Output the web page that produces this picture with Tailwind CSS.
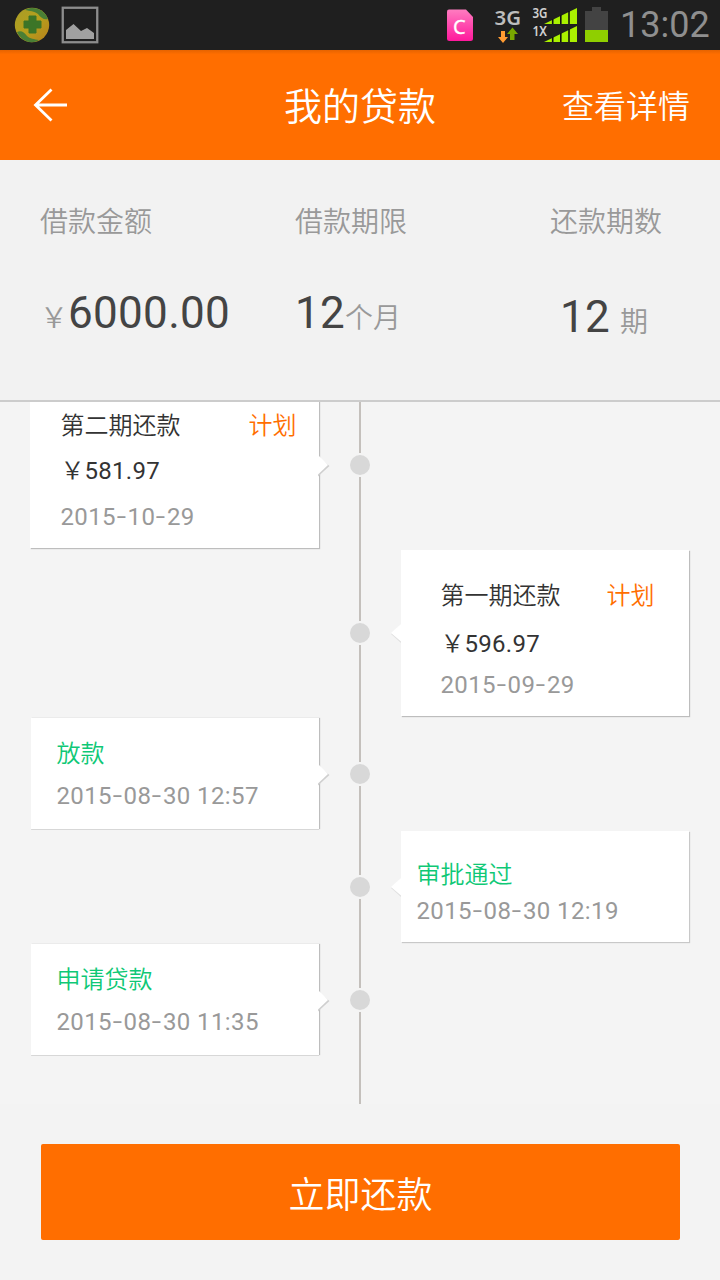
<!DOCTYPE html>
<html lang="zh-CN">
<head>
<meta charset="utf-8">
<meta name="viewport" content="width=720">
<title>我的贷款</title>
<script src="https://cdn.jsdelivr.net/npm/@tailwindcss/browser@4"></script>
</head>
<body class="bg-[#f3f3f3]">
<div class="w-[720px] h-[1280px] flex flex-col overflow-hidden whitespace-nowrap font-['Roboto','Noto_Sans_CJK_SC',sans-serif]">

  <!-- Status bar -->
  <div class="h-[50px] shrink-0 bg-[#1f1f1f] flex items-center justify-between">
    <svg class="w-[120px] h-[50px]" viewBox="0 0 120 50">
      <defs>
        <linearGradient id="ball" x1="0" y1="0" x2="1" y2="1"><stop offset="0" stop-color="#a89c28"/><stop offset=".5" stop-color="#b5a01c"/><stop offset="1" stop-color="#b8801c"/></linearGradient>
      </defs>
      <circle cx="32" cy="25" r="17.2" fill="url(#ball)"/>
      <path d="M25 10C34 5 45 10 48 19C44 20 41 18 38 14C34 11 30 11 25 10Z" fill="#4a7f35"/>
      <path d="M39 40C31 45 21 41 17 32C21 30 24 32 27 36C30 39 34 39 39 40Z" fill="#4a7f35"/>
      <path d="M29 16h7v5h5v7h-5v5h-7v-5h-5v-7h5z" fill="#3c7527" stroke="#3c7527" stroke-width="1" stroke-linejoin="round"/>
      <rect x="62.750" y="7.750" width="34.500" height="34.500" fill="#1f1f1f" stroke="#8d8d8d" stroke-width="2.300"/>
      <path d="M66 30L73.500 24L81 31L87 28L94 33V39H66Z" fill="#a0a0a0"/>
    </svg>
    <div class="flex items-center">
      <svg class="w-[170px] h-[50px]" viewBox="440 0 170 50">
        <defs>
          <linearGradient id="sim" x1="0" y1="0" x2="0" y2="1"><stop offset="0" stop-color="#ff7cc0"/><stop offset="1" stop-color="#ff189c"/></linearGradient>
        </defs>
        <path d="M449 9.500H466L473 17V38.500Q473 41 470.500 41H449.500Q447 41 447 38.500V11.500Q447 9.500 449 9.500Z" fill="url(#sim)"/>
        <text x="453" y="34" font-family="Noto Sans" font-size="20" font-weight="400" fill="#fff" stroke="#fff" stroke-width=".3">C</text>
        <text x="494.500" y="25" font-family="Noto Sans" font-size="20.500" font-weight="600" fill="#bdbdbd" textLength="26.500" lengthAdjust="spacingAndGlyphs">3G</text>
        <path d="M501 31H505V37H508L503 43L498 37H501Z" fill="#ff9b32"/>
        <path d="M510 40V34H507L512.500 27.500L518 34H514.500V40Z" fill="#79a800"/>
        <text x="532.500" y="18" font-family="Noto Sans" font-size="13.500" font-weight="600" fill="#d0d0d0" textLength="15" lengthAdjust="spacingAndGlyphs">3G</text>
        <text x="532.500" y="36" font-family="Noto Sans" font-size="13.500" font-weight="600" fill="#d0d0d0" textLength="14.500" lengthAdjust="spacingAndGlyphs">1X</text>
        <path d="M544 24L577 8V24Z M544 42L577 26V42Z" fill="#aaf000"/>
        <path d="M552.700 19V24M560.800 15V24M569 11V24M552.700 37V42M560.800 33V42M569 29V42" stroke="#111" stroke-width="1.600"/>
        <path d="M585 11H592V7H601V11H608V30H585Z" fill="#434343"/>
        <rect x="585" y="30" width="23" height="12" fill="#8fcf00"/>
      </svg>
      <div class="w-[110px] pl-[10px] text-[36px] leading-[50px] text-[#8f8f8f]">13:02</div>
    </div>
  </div>

  <!-- Title bar -->
  <header class="h-[110px] shrink-0 bg-[#ff6e00] bg-linear-to-b from-[#e66300] from-0% to-[#ff6e00] to-4% grid grid-cols-[1fr_auto_1fr] items-center text-white">
    <svg class="ml-[33px] w-[36px] h-[36px]" viewBox="0 0 36 36" fill="none" stroke="#fff" stroke-width="2.800"><path d="M2 18H34M18.500 2.500L2.500 18L18.500 33.500"/></svg>
    <h1 class="text-[38px] leading-[50px] font-[350] pt-[4px]">我的贷款</h1>
    <div class="text-[32px] leading-[50px] text-right pr-[30px] pt-[3px] font-[350]">查看详情</div>
  </header>

  <!-- Loan summary -->
  <section class="h-[242px] shrink-0 bg-[#f2f2f2] border-b-2 border-[#cccccc] grid grid-cols-[255px_255px_170px] pl-10 pt-[43px] text-[28px] font-[350] text-[#999999]">
    <div>
      <div class="leading-[40px]">借款金额</div>
      <div class="mt-[40px] leading-[60px]">￥<span class="text-[44px] tracking-[.3px] font-normal text-[#444444]">6000.00</span></div>
    </div>
    <div>
      <div class="leading-[40px]">借款期限</div>
      <div class="mt-[40px] leading-[60px]"><span class="text-[44px] tracking-[.3px] font-normal text-[#444444]">12</span>个月</div>
    </div>
    <div>
      <div class="leading-[40px]">还款期数</div>
      <div class="mt-[44px] pl-[10px] leading-[60px]"><span class="text-[44px] tracking-[.3px] font-normal text-[#444444] mr-[10px]">12</span>期</div>
    </div>
  </section>

  <!-- Repayment timeline -->
  <main class="h-[702px] shrink-0 bg-[#f4f4f4] overflow-hidden text-[24px] leading-8 text-[#999999]">
    <div class="-mt-[21px] h-[168px] grid grid-cols-[350px_20px_350px]">
      <div class="relative ml-[30px] w-[289px] h-[166px] mt-px bg-white shadow-[1px_1px_1px_#bdbdbd] pl-[30.4px] pt-[28px]">
        <div class="flex font-[350] text-[#333333]"><span class="w-[188px]">第二期还款</span><span class="text-[#ff6e00]">计划</span></div>
        <div class="mt-[13px] tracking-[.3px] text-[#333333]"><span class="tracking-normal font-[350]">￥</span>581.97</div>
        <div class="mt-[14px] tracking-[.4px]">2015<span class="inline-block w-[11.6px] text-center scale-x-140 -translate-y-px">-</span>10<span class="inline-block w-[11.6px] text-center scale-x-140 -translate-y-px">-</span>29</div>
        <svg class="absolute left-[288px] top-[72px] w-[12px] h-[24px]" viewBox="0 0 12 24"><path d="M0 3L11.500 12L0 22.500Z" fill="#cfcfcf"/><path d="M0 1L10 11L0 20.500Z" fill="#fff"/></svg>
      </div>
      <div class="flex flex-col items-center gap-[2px]"><i class="flex-1 w-[2px] bg-[#c4c0bc]"></i><i class="size-5 rounded-full bg-[#d8d8d8]"></i><i class="flex-1 w-[2px] bg-[#c4c0bc]"></i></div>
    </div>

    <div class="h-[168px] grid grid-cols-[350px_20px_350px]">
      <div></div>
      <div class="flex flex-col items-center gap-[2px]"><i class="flex-1 w-[2px] bg-[#c4c0bc]"></i><i class="size-5 rounded-full bg-[#d8d8d8]"></i><i class="flex-1 w-[2px] bg-[#c4c0bc]"></i></div>
      <div class="relative ml-[31px] w-[288px] h-[166px] mt-px bg-white shadow-[1px_1px_1px_#bdbdbd] pl-[39.4px] pt-[30px]">
        <div class="flex font-[350] text-[#333333]"><span class="w-[166px]">第一期还款</span><span class="text-[#ff6e00]">计划</span></div>
        <div class="mt-[16px] tracking-[.3px] text-[#333333]"><span class="tracking-normal font-[350]">￥</span>596.97</div>
        <div class="mt-[9px] tracking-[.4px]">2015<span class="inline-block w-[11.6px] text-center scale-x-140 -translate-y-px">-</span>09<span class="inline-block w-[11.6px] text-center scale-x-140 -translate-y-px">-</span>29</div>
        <svg class="absolute -left-[10px] top-[72px] w-[12px] h-[24px]" viewBox="0 0 12 24"><path d="M10 2L0 12L10 21Z" fill="#e0e0e0"/><path d="M12 0L0 11L10 19.500H12Z" fill="#fff"/></svg>
      </div>
    </div>

    <div class="h-[113px] grid grid-cols-[350px_20px_350px]">
      <div class="relative ml-[31px] w-[288px] h-[111px] mt-px bg-white shadow-[1px_0_1px_#bdbdbd,0_1px_0_#dddddd] pl-[25.4px] pt-[20px]">
        <div class="font-[350] text-[#0fc876]">放款</div>
        <div class="mt-[10px] tracking-[.4px]">2015<span class="inline-block w-[11.6px] text-center scale-x-140 -translate-y-px">-</span>08<span class="inline-block w-[11.6px] text-center scale-x-140 -translate-y-px">-</span>30 12:57</div>
        <svg class="absolute left-[287px] top-[45px] w-[12px] h-[24px]" viewBox="0 0 12 24"><path d="M0 3L11.500 12L0 22.500Z" fill="#cfcfcf"/><path d="M0 1L10 11L0 20.500Z" fill="#fff"/></svg>
      </div>
      <div class="flex flex-col items-center gap-[2px]"><i class="flex-1 w-[2px] bg-[#c4c0bc]"></i><i class="size-5 rounded-full bg-[#d8d8d8]"></i><i class="flex-1 w-[2px] bg-[#c4c0bc]"></i></div>
    </div>

    <div class="h-[113px] grid grid-cols-[350px_20px_350px]">
      <div></div>
      <div class="flex flex-col items-center gap-[2px]"><i class="flex-1 w-[2px] bg-[#c4c0bc]"></i><i class="size-5 rounded-full bg-[#d8d8d8]"></i><i class="flex-1 w-[2px] bg-[#c4c0bc]"></i></div>
      <div class="relative ml-[31px] w-[288px] h-[111px] mt-px bg-white shadow-[1px_1px_1px_#c8c8c8] pl-[15.4px] pt-[28px]">
        <div class="font-[350] text-[#0fc876]">审批通过</div>
        <div class="mt-[4px] tracking-[.4px]">2015<span class="inline-block w-[11.6px] text-center scale-x-140 -translate-y-px">-</span>08<span class="inline-block w-[11.6px] text-center scale-x-140 -translate-y-px">-</span>30 12:19</div>
        <svg class="absolute -left-[10px] top-[45px] w-[12px] h-[24px]" viewBox="0 0 12 24"><path d="M10 2L0 12L10 21Z" fill="#e0e0e0"/><path d="M12 0L0 11L10 19.500H12Z" fill="#fff"/></svg>
      </div>
    </div>

    <div class="h-[113px] grid grid-cols-[350px_20px_350px]">
      <div class="relative ml-[31px] w-[288px] h-[111px] mt-px bg-white shadow-[1px_0_1px_#bdbdbd,0_1px_0_#dddddd] pl-[25.4px] pt-[20px]">
        <div class="font-[350] text-[#0fc876]">申请贷款</div>
        <div class="mt-[10px] tracking-[.4px]">2015<span class="inline-block w-[11.6px] text-center scale-x-140 -translate-y-px">-</span>08<span class="inline-block w-[11.6px] text-center scale-x-140 -translate-y-px">-</span>30 11:35</div>
        <svg class="absolute left-[287px] top-[45px] w-[12px] h-[24px]" viewBox="0 0 12 24"><path d="M0 3L11.500 12L0 22.500Z" fill="#cfcfcf"/><path d="M0 1L10 11L0 20.500Z" fill="#fff"/></svg>
      </div>
      <div class="flex flex-col items-center gap-[2px]"><i class="flex-1 w-[2px] bg-[#c4c0bc]"></i><i class="size-5 rounded-full bg-[#d8d8d8]"></i><i class="flex-1 w-[2px] bg-[#c4c0bc]"></i></div>
    </div>
    <div class="mx-auto w-[2px] h-[48px] bg-[#c4c0bc]"></div>
  </main>

  <!-- Repay action -->
  <footer class="flex-1 bg-[#f3f3f3] px-10 pt-10">
    <button class="block ml-px w-[639px] h-[96px] pt-[8px] rounded-[2px] bg-[#ff6e00] text-white text-[36px] font-[350]">立即还款</button>
  </footer>
</div>
</body>
</html>
